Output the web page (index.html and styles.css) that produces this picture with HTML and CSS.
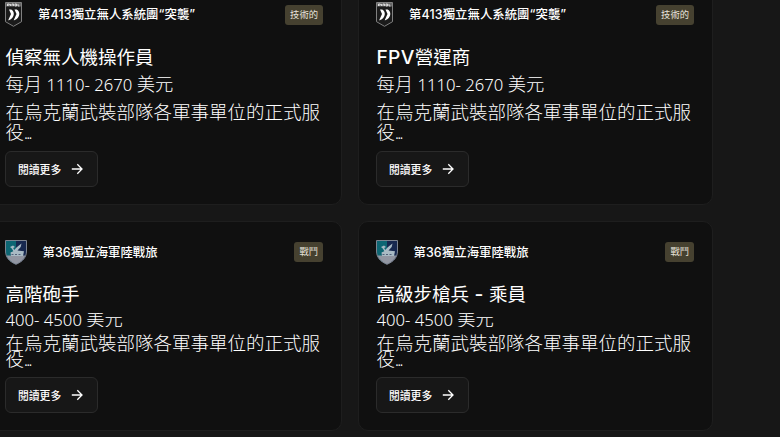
FILE: index.html
```html
<!DOCTYPE html>
<html lang="zh-Hant">
<head>
    <meta charset="UTF-8">
    <meta name="viewport" content="width=device-width, initial-scale=1.0">
    <title>職缺</title>
    <link rel="stylesheet" href="styles.css">
</head>
<body>
    <!-- shared icons -->
    <svg class="sprite" width="0" height="0">
        <symbol id="raid" viewBox="0 0 17 25">
            <path d="M.5 .5h16v19.200L8.500 24.300 .5 19.700z" fill="#1b1b1b" stroke="#8c8c8c" stroke-width=".9"/>
            <path d="M1 1h15v3.500H1z" fill="#666"/>
            <path d="M2.500 4V2h1.800v1.200H2.500M5.500 2v2M7 4V2h1.500v2M10 2v2h1.500V2zM13 2v2h1.500" fill="none" stroke="#f2f2f2" stroke-width=".8"/>
            <path d="M4 7.500h2.200c1.600.6 2.600 2.500 2.600 4.300 0 2.700-2 5.700-5 6.500h-.6l2.800-6.300zM9.500 7.500h2.200c1.600.6 2.600 2.500 2.600 4.300 0 2.700-2 5.700-5 6.500h-.6l2.800-6.300z" fill="#fff"/>
        </symbol>
        <symbol id="marines" viewBox="0 0 22 25">
            <path d="M.5 .5H11v23.800C4 21.500.5 17 .5 11z" fill="#0d6673"/>
            <path d="M11 .5h10.500V11c0 6-3.500 10.500-10.500 13.300z" fill="#17284f"/>
            <path d="M1.500 15.500h19C18.800 19.800 15.500 22.500 11 24.300 6.500 22.500 3.200 19.800 1.500 15.500z" fill="#9296a2"/>
            <path d="M5 7l3-1.500 2 1.500-1.800 1 1 2L12 7l4.500-3.500-.8 3.500-3.200 3.500 6.500.8-1 4.700H6l-.5-3.500 2.800-1.300-1.300-2.500z" fill="#a9bac4"/>
            <path d="M6.500 14.500h2M10 14.500h2M13.500 14.500h2" stroke="#52617a" stroke-width="1.100"/>
            <path d="M.5 .5h21V11c0 6-3.500 10.500-10.500 13.300C4 21.500.5 17 .5 11z" fill="none" stroke="#7d8490" stroke-width="1"/>
        </symbol>
        <symbol id="arrow" viewBox="0 0 12 12">
            <path d="M.8 6h10M6.300 1.300L11 6l-4.700 4.700" fill="none" stroke="#fff" stroke-width="1.300"/>
        </symbol>
    </svg>

    <div class="vacancies">
        <div class="card">
            <div class="card-header">
                <svg class="logo logo-raid"><use href="#raid"/></svg>
                <span class="unit">第<span class="wide">413</span>獨立無人系統團<span class="wide">“</span>突襲<span class="wide">”</span></span>
                <span class="tag">技術的</span>
            </div>
            <h3 class="title">偵察無人機操作員</h3>
            <p class="salary">每月<span class="num"> 1110- 2670 </span>美元</p>
            <p class="description">在烏克蘭武裝部隊各軍事單位的正式服役<span class="dots">...</span></p>
            <a class="more">閱讀更多 <svg class="arrow"><use href="#arrow"/></svg></a>
        </div>

        <div class="card">
            <div class="card-header">
                <svg class="logo logo-raid"><use href="#raid"/></svg>
                <span class="unit">第<span class="wide">413</span>獨立無人系統團<span class="wide">“</span>突襲<span class="wide">”</span></span>
                <span class="tag">技術的</span>
            </div>
            <h3 class="title"><span class="wide">FPV</span>營運商</h3>
            <p class="salary">每月<span class="num"> 1110- 2670 </span>美元</p>
            <p class="description">在烏克蘭武裝部隊各軍事單位的正式服役<span class="dots">...</span></p>
            <a class="more">閱讀更多 <svg class="arrow"><use href="#arrow"/></svg></a>
        </div>

        <div class="card compact">
            <div class="card-header">
                <svg class="logo logo-marines"><use href="#marines"/></svg>
                <span class="unit">第<span class="wide">36</span>獨立海軍陸戰旅</span>
                <span class="tag">戰鬥</span>
            </div>
            <h3 class="title">高階砲手</h3>
            <p class="salary"><span class="num">400- 4500 </span>美元</p>
            <p class="description">在烏克蘭武裝部隊各軍事單位的正式服役<span class="dots">...</span></p>
            <a class="more">閱讀更多 <svg class="arrow"><use href="#arrow"/></svg></a>
        </div>

        <div class="card compact">
            <div class="card-header">
                <svg class="logo logo-marines"><use href="#marines"/></svg>
                <span class="unit">第<span class="wide">36</span>獨立海軍陸戰旅</span>
                <span class="tag">戰鬥</span>
            </div>
            <h3 class="title">高級步槍兵<span class="wide"> - </span>乘員</h3>
            <p class="salary"><span class="num">400- 4500 </span>美元</p>
            <p class="description">在烏克蘭武裝部隊各軍事單位的正式服役<span class="dots">...</span></p>
            <a class="more">閱讀更多 <svg class="arrow"><use href="#arrow"/></svg></a>
        </div>
    </div>
</body>
</html>
```
FILE: styles.css
```css
* {
    box-sizing: border-box;
}

body {
    margin: 0;
    height: 437px;
    overflow: hidden;
    background: #171717;
    color: #fff;
    font-family: "Noto Sans", "Noto Sans CJK TC", sans-serif;
}

.sprite {
    display: block;
}

.vacancies {
    display: grid;
    grid-template-columns: 355px 355px;
    grid-template-rows: 221px 210px;
    gap: 16px;
    margin: -16px 0 0 -13px; /* list is scrolled a little past its start */
}

.card {
    display: flex;
    flex-direction: column;
    align-items: flex-start;
    padding: 17px 17px 0;
    background: #101010;
    border: 1px solid #1e1e1e;
    border-radius: 10px;
}

.card-header {
    display: flex;
    align-items: center;
    align-self: stretch;
    height: 25px;
    padding-right: 1px;
}

.logo {
    height: 25px;
}

.logo-raid {
    width: 17px;
    margin-right: 16px;
}

.logo-marines {
    width: 22px;
    margin-right: 15.5px;
}

.unit {
    font-family: Inter, "Noto Sans CJK TC", sans-serif;
    font-size: 12.4px;
    font-weight: 500;
    line-height: 20px;
    white-space: nowrap;
}

.unit .wide {
    letter-spacing: 0.2px;
}

.tag {
    margin-left: auto;
    padding: 0 5px;
    height: 20px;
    font-size: 9.3px;
    line-height: 20px;
    color: #e6e4dc;
    background: #464130;
    border-radius: 3px;
}

.title {
    margin: 18px 0 0;
    font-family: Inter, "Noto Sans CJK TC", sans-serif;
    font-size: 18.5px;
    font-weight: 400;
    line-height: 24px;
}

.title .wide {
    font-size: 19.2px;
    font-weight: 500;
    line-height: 1px;
    letter-spacing: 0.3px;
}

.title,
.salary,
.description {
    padding-left: 0.5px;
}

.salary {
    margin: 5px 0 0;
    font-size: 18.3px;
    font-weight: 300;
    line-height: 20px;
    white-space: nowrap;
}

.num {
    font-size: 16.7px;
    line-height: 1px;
}

.description {
    margin: 8px 0 0;
    font-size: 18.5px;
    font-weight: 300;
    line-height: 20px;
}

.dots {
    font-size: 16px;
    line-height: 1px;
    letter-spacing: -1.6px;
}

.more {
    display: flex;
    align-items: center;
    justify-content: space-between;
    width: 93px;
    height: 36px;
    margin-top: 9px;
    padding: 0 14px 0 12px;
    font-size: 10.8px;
    font-weight: 500;
    background: #171717;
    border: 1px solid #2b2b2b;
    border-radius: 6px;
}

.arrow {
    width: 12px;
    height: 12px;
}

/* Short rows: the lines are squeezed and the salary is cut */
.compact {
    padding-top: 18px;
}

.compact .card-header {
    height: 24px;
}

.compact .unit {
    padding-top: 1px;
    line-height: 21px;
}

.compact .salary {
    height: 14px;
    margin-top: 7px;
    line-height: 11px;
    overflow: hidden;
}

.compact .description {
    margin-top: 8px;
    line-height: 16px;
}

.compact .more {
    margin-top: 10px;
}
```
